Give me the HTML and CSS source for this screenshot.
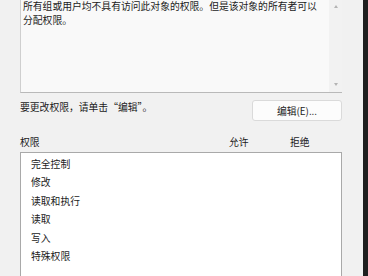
FILE: index.html
```html
<!DOCTYPE html>
<html lang="zh-CN">

<head>
  <meta charset="UTF-8" />
  <title>权限</title>
  <link rel="stylesheet" href="styles.css">
</head>

<body>

  <div class="window">
    <div class="dialog">

      <div class="info-box">
        <div class="info-text">
          所有组或用户均不具有访问此对象的权限。但是该对象的所有者可以<br>分配权限。
        </div>
        <div class="scrollbar">
          <span class="arrow-up"></span>
          <span class="arrow-down"></span>
        </div>
      </div>

      <div class="edit-row">
        <span class="edit-hint">要更改权限，请单击“编辑”。</span>
        <button class="edit-btn">编辑(E)...</button>
      </div>

      <div class="perm-header">
        <span class="col-name">权限</span>
        <span class="col-allow">允许</span>
        <span class="col-deny">拒绝</span>
      </div>

      <div class="perm-list">
        <div class="perm-item">完全控制</div>
        <div class="perm-item">修改</div>
        <div class="perm-item">读取和执行</div>
        <div class="perm-item">读取</div>
        <div class="perm-item">写入</div>
        <div class="perm-item">特殊权限</div>
      </div>

    </div>
    <div class="edge"></div>
  </div>

</body>

</html>
```

FILE: styles.css
```css
body {
  margin: 0;
  padding: 0;
  font-family: "Noto Sans CJK SC", "Noto Sans", sans-serif;
  font-size: 9.8px;
  color: #1b1b1b;
  background: #f0f0f0;
  overflow: hidden;
}

.window {
  display: flex;
  width: 368px;
  height: 276px;
}

.dialog {
  flex: 1;
  padding: 0 21px 0 20px;
  background: #f1f1f1;
  display: flex;
  flex-direction: column;
}

.edge {
  width: 5px;
  background: #1f1f1f;
}

.info-box {
  display: flex;
  height: 93px;
  background: #f9f9f9;
  border-left: 1px solid #cfcfcf;
  border-bottom: 1px solid #b9b9b9;
  box-sizing: border-box;
}

.info-text {
  flex: 1;
  padding: 0 0 0 2px;
  line-height: 13.5px;
}

.scrollbar {
  width: 13px;
  background: #f2f2f2;
  display: flex;
  flex-direction: column;
  justify-content: space-between;
  align-items: center;
  padding: 5px 0 6px;
}

.arrow-up {
  width: 0;
  height: 0;
  border-left: 2.5px solid transparent;
  border-right: 2.5px solid transparent;
  border-bottom: 3px solid #b4b4b4;
}

.arrow-down {
  width: 0;
  height: 0;
  border-left: 2.5px solid transparent;
  border-right: 2.5px solid transparent;
  border-top: 3px solid #b4b4b4;
}

.edit-row {
  display: flex;
  justify-content: space-between;
  align-items: flex-start;
  margin-top: 4px;
}

.edit-hint {
  line-height: 14px;
  margin-top: 3px;
}

.edit-btn {
  width: 90px;
  height: 21px;
  margin-top: 3px;
  padding: 0;
  font-family: inherit;
  font-size: 9.8px;
  color: #1b1b1b;
  background: #fcfcfc;
  border: 1px solid #dadada;
  border-radius: 3px;
}

.perm-header {
  display: flex;
  margin-top: 14px;
  line-height: 14px;
}

.col-name {
  flex: 1;
}

.col-allow {
  width: 61px;
}

.col-deny {
  width: 52px;
}

.perm-list {
  flex: 1;
  margin-top: 3px;
  padding: 2px 0 0 10px;
  background: #ffffff;
  border: 1px solid #a9a9a9;
  border-bottom: none;
}

.perm-item {
  height: 18.4px;
  line-height: 18.4px;
}
```
